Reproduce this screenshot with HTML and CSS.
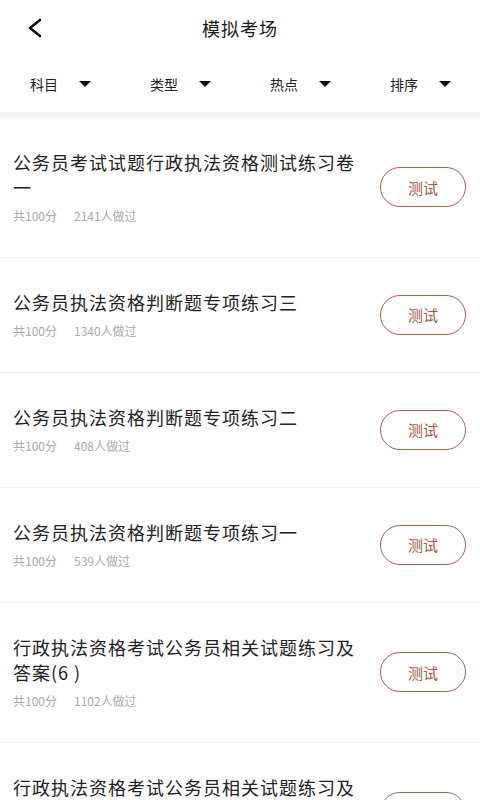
FILE: index.html
```html
<!DOCTYPE html>
<html lang="zh-CN">
<head>
<meta charset="utf-8">
<title>模拟考场</title>
<link rel="stylesheet" href="styles.css">
</head>
<body>
<div class="page">
  <header class="topbar">
    <span class="back">
      <svg width="16" height="20" viewBox="0 0 16 20"><path d="M13 2 L3 10 L13 18" fill="none" stroke="#111" stroke-width="2.6" stroke-linecap="round" stroke-linejoin="round"/></svg>
    </span>
    <h1 class="title">模拟考场</h1>
  </header>
  <nav class="filters">
    <div class="filter"><span class="flabel">科目</span><span class="caret"></span></div>
    <div class="filter"><span class="flabel">类型</span><span class="caret"></span></div>
    <div class="filter"><span class="flabel">热点</span><span class="caret"></span></div>
    <div class="filter"><span class="flabel">排序</span><span class="caret"></span></div>
  </nav>
  <div class="band"></div>
  <ul class="list">
    <li class="item">
      <div class="info">
        <div class="name">公务员考试试题行政执法资格测试练习卷一</div>
        <div class="meta"><span class="score">共100分</span><span>2141人做过</span></div>
      </div>
      <button class="btn">测试</button>
    </li>
    <li class="item">
      <div class="info">
        <div class="name">公务员执法资格判断题专项练习三</div>
        <div class="meta"><span class="score">共100分</span><span>1340人做过</span></div>
      </div>
      <button class="btn">测试</button>
    </li>
    <li class="item">
      <div class="info">
        <div class="name">公务员执法资格判断题专项练习二</div>
        <div class="meta"><span class="score">共100分</span><span>408人做过</span></div>
      </div>
      <button class="btn">测试</button>
    </li>
    <li class="item">
      <div class="info">
        <div class="name">公务员执法资格判断题专项练习一</div>
        <div class="meta"><span class="score">共100分</span><span>539人做过</span></div>
      </div>
      <button class="btn">测试</button>
    </li>
    <li class="item">
      <div class="info">
        <div class="name">行政执法资格考试公务员相关试题练习及答案(6 )</div>
        <div class="meta"><span class="score">共100分</span><span>1102人做过</span></div>
      </div>
      <button class="btn">测试</button>
    </li>
    <li class="item">
      <div class="info">
        <div class="name">行政执法资格考试公务员相关试题练习及答案(5 )</div>
        <div class="meta"><span class="score">共100分</span><span>986人做过</span></div>
      </div>
      <button class="btn">测试</button>
    </li>
  </ul>
</div>
</body>
</html>
```

FILE: styles.css
```css
* { box-sizing: border-box; }
html, body {
  margin: 0;
  padding: 0;
  background: #fff;
}
body {
  font-family: "Noto Sans CJK SC", "Noto Sans", "Liberation Sans", sans-serif;
  color: #222;
  width: 480px;
  height: 800px;
  overflow: hidden;
}
.page {
  display: flex;
  flex-direction: column;
}
.topbar {
  height: 56px;
  display: flex;
  align-items: center;
  justify-content: center;
  position: relative;
}
.back {
  position: absolute;
  left: 27px;
  top: 18px;
  display: flex;
}
.title {
  margin: 0;
  font-size: 18px;
  font-weight: normal;
  letter-spacing: 1px;
  color: #1a1a1a;
}
.filters {
  height: 56px;
  display: flex;
  align-items: center;
}
.filter {
  width: 120px;
  padding-left: 30px;
  display: flex;
  align-items: center;
}
.flabel {
  font-size: 14px;
  color: #222;
  width: 49px;
}
.caret {
  width: 0;
  height: 0;
  border-left: 6px solid transparent;
  border-right: 6px solid transparent;
  border-top: 6px solid #111;
}
.band {
  height: 6px;
  background: #f6f6f6;
}
.list {
  list-style: none;
  margin: 0;
  padding: 0;
}
.item {
  display: flex;
  align-items: center;
  padding: 32px 14px 33px 13px;
  border-bottom: 1px solid #f2f2f2;
}
.info {
  flex: 1;
  margin-right: 18px;
}
.name {
  font-size: 18px;
  line-height: 25px;
  letter-spacing: 1px;
  color: #222;
}
.meta {
  margin-top: 8px;
  font-size: 12px;
  line-height: 16px;
  color: #aaa;
}
.score {
  margin-right: 17px;
}
.btn {
  width: 86px;
  height: 40px;
  border: 1.5px solid #a85e4d;
  border-radius: 20px;
  background: #fff;
  color: #a2594a;
  font-family: inherit;
  font-size: 15px;
  padding: 0;
  flex-shrink: 0;
}
```
